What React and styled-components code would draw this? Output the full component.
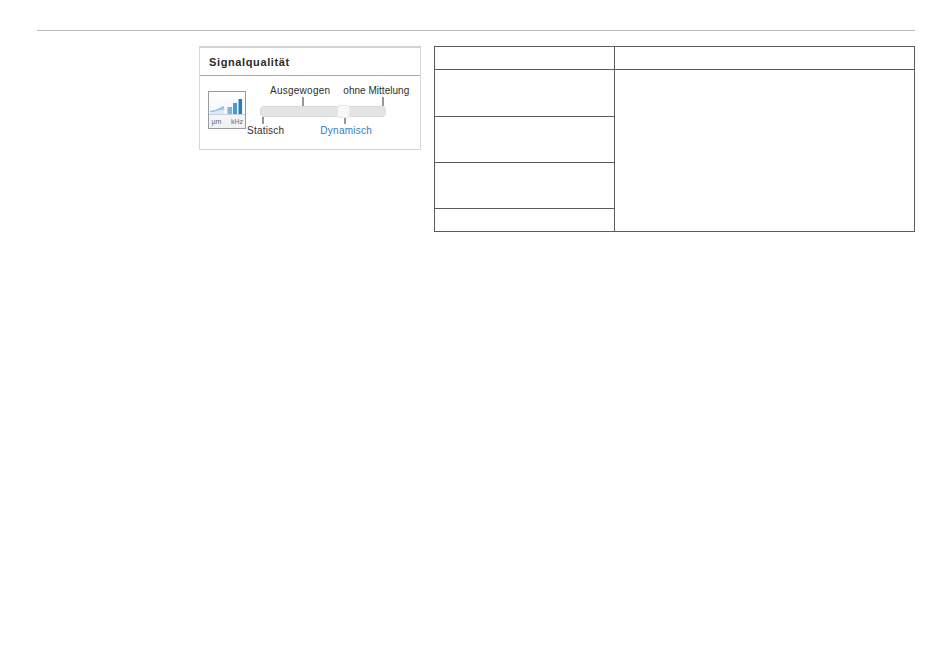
import React from "react";
import styled, { createGlobalStyle } from "styled-components";

const Global = createGlobalStyle`
  html, body { margin: 0; padding: 0; background: #fff; }
  body { font-family: "Liberation Sans", Arial, sans-serif; }
`;
const Page = styled.div`
  width: 950px; height: 665px; box-sizing: border-box; padding: 30px 35px 0 37px; overflow: hidden;
`;
const Rule = styled.div`height: 1px; background: #b9b9b9;`;
const Content = styled.div`display: flex; align-items: flex-start; gap: 13px; padding: 15px 0 0 162px;`;
const Panel = styled.section`
  width: 222px; height: 104px; box-sizing: border-box; flex: none;
  border: 1px solid #d6d6d6; border-top: 2px solid #d2d2d2; background: #fff;
`;
const PanelTitle = styled.h3`
  margin: 0; height: 28px; box-sizing: border-box; padding: 8px 0 0 9px;
  border-bottom: 1px solid #a9a9a9;
  font-size: 11px; line-height: 13px; font-weight: 700; color: #2b2b2b; letter-spacing: 0.62px;
`;
const PanelBody = styled.div`display: flex; align-items: flex-start; gap: 1px; padding: 9px 0 0 8px;`;
const Thumbnail = styled.svg`display: block; flex: none; width: 38px; height: 38px; margin-top: 6px;`;
const Slider = styled.div`display: flex; flex-direction: column; flex: none; width: 170px;`;
const Scale = styled.div`display: flex; gap: ${p => p.$gap}px; padding-left: ${p => p.$inset}px;`;
const Stop = styled.div`display: flex; flex-direction: column;`;
const Tick = styled.div`
  width: 2px; height: ${p => p.$h}px; margin-left: ${p => p.$at}px; margin-bottom: ${p => p.$below || 0}px;
  background: #969696;
`;
const Label = styled.span`
  white-space: nowrap; font-size: 10px; line-height: 12px; letter-spacing: ${p => p.$ls}px;
  color: ${p => (p.$active ? "#2f7cc4" : "#2e2e2e")};
`;
const Track = styled.div`
  position: relative; width: 126px; height: 11px; box-sizing: border-box; margin-left: 13px;
  border-radius: 4px; background: #e4e4e4; border: 1px solid #dadada;
`;
const Thumb = styled.div`
  position: absolute; left: 76px; top: -2px; width: 13px; height: 13px; box-sizing: border-box;
  border-radius: 2px; background: #f7f7f7; border: 1px solid #e8e8e8;
`;
const Grid = styled.table`
  width: 481px; height: 186px; border-collapse: collapse; table-layout: fixed; flex: none;
`;
const FirstColumn = styled.col`width: 180px;`;
const Cell = styled.td`border: 1px solid #5c5c5c; padding: 0; height: ${p => p.$h}px;`;

export default function App() {
  return (
    <Page>
      <Global />
      <Rule />
      <Content>
        <Panel>
          <PanelTitle>Signalqualität</PanelTitle>
          <PanelBody>
            <Thumbnail viewBox="0 0 38 38">
              <defs>
                <linearGradient id="bg" x1="0" y1="0" x2="0" y2="1">
                  <stop offset="0" stopColor="#ffffff" />
                  <stop offset="1" stopColor="#eef1f3" />
                </linearGradient>
              </defs>
              <rect x="0.5" y="0.5" width="37" height="37" fill="url(#bg)" stroke="#9a9a9a" />
              <path d="M2 21l1-1 1 1 1-2 1 2 1-2 1 1 1-2 1 2 1-3 1 2 1-3 1 3 1-4 1 4 V23 H2z" fill="#dcebf5" />
              <path d="M2 21l1-1 1 1 1-2 1 2 1-2 1 1 1-2 1 2 1-3 1 2 1-3 1 3 1-4 1 4" fill="none" stroke="#7fb8de" strokeWidth="0.8" />
              <rect x="19.5" y="16" width="4.5" height="7" fill="#7ab8e0" />
              <rect x="25" y="12" width="4" height="11" fill="#479ad2" />
              <rect x="30.5" y="8" width="3.5" height="15" fill="#1f7fbf" />
              <rect x="1" y="23" width="36" height="1" fill="#c4d4de" />
              <text x="3.5" y="33" fontFamily="Liberation Sans" fontSize="7" fill="#6a6a6a">µm</text>
              <text x="23" y="33" fontFamily="Liberation Sans" fontSize="7" fill="#6a6a6a">kHz</text>
            </Thumbnail>
            <Slider>
              <Scale $inset={23} $gap={13}>
                <Stop>
                  <Label $ls={0.25}>Ausgewogen</Label>
                  <Tick $h={9} $at={32} />
                </Stop>
                <Stop>
                  <Label $ls={0.02}>ohne Mittelung</Label>
                  <Tick $h={9} $at={39} />
                </Stop>
              </Scale>
              <Track>
                <Thumb />
              </Track>
              <Scale $inset={0} $gap={36}>
                <Stop>
                  <Tick $h={7} $at={15} $below={1} />
                  <Label $ls={0.22}>Statisch</Label>
                </Stop>
                <Stop>
                  <Tick $h={7} $at={24} $below={1} />
                  <Label $ls={0.25} $active>Dynamisch</Label>
                </Stop>
              </Scale>
            </Slider>
          </PanelBody>
        </Panel>
        <Grid>
          <colgroup>
            <FirstColumn />
            <col />
          </colgroup>
          <tbody>
            <tr><Cell $h={22} /><Cell $h={22} /></tr>
            <tr><Cell $h={46} /><Cell rowSpan={4} /></tr>
            <tr><Cell $h={45} /></tr>
            <tr><Cell $h={45} /></tr>
            <tr><Cell $h={22} /></tr>
          </tbody>
        </Grid>
      </Content>
    </Page>
  );
}
